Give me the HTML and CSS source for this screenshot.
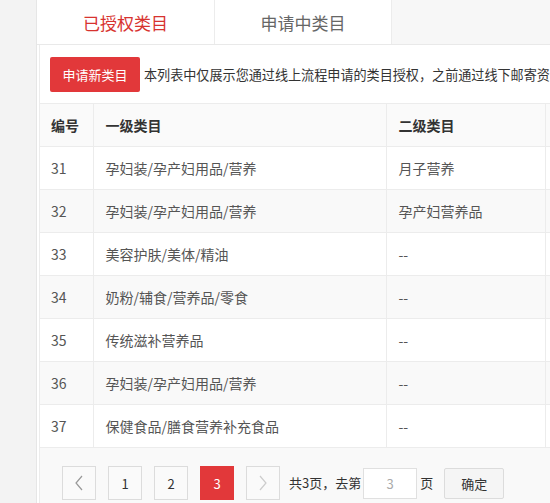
FILE: index.html
```html
<!DOCTYPE html>
<html lang="zh">
<head>
<meta charset="utf-8">
<link rel="stylesheet" href="styles.css">
</head>
<body>
<div class="page">
  <div class="side"></div>
  <div class="panel">
    <div class="tabs">
      <div class="tab active">已授权类目</div>
      <div class="tab">申请中类目</div>
      <div class="tab-rest"></div>
    </div>
    <div class="content">
      <div class="toolbar">
        <button class="btn-apply">申请新类目</button>
        <span class="note">本列表中仅展示您通过线上流程申请的类目授权，之前通过线下邮寄资质申请的类目授权请联系小二查询</span>
      </div>
      <table class="grid">
        <colgroup>
          <col class="c-id"><col class="c-l1"><col class="c-l2"><col class="c-more">
        </colgroup>
        <thead>
          <tr><th>编号</th><th>一级类目</th><th>二级类目</th><th></th></tr>
        </thead>
        <tbody>
          <tr><td>31</td><td>孕妇装/孕产妇用品/营养</td><td>月子营养</td><td></td></tr>
          <tr><td>32</td><td>孕妇装/孕产妇用品/营养</td><td>孕产妇营养品</td><td></td></tr>
          <tr><td>33</td><td>美容护肤/美体/精油</td><td>--</td><td></td></tr>
          <tr><td>34</td><td>奶粉/辅食/营养品/零食</td><td>--</td><td></td></tr>
          <tr><td>35</td><td>传统滋补营养品</td><td>--</td><td></td></tr>
          <tr><td>36</td><td>孕妇装/孕产妇用品/营养</td><td>--</td><td></td></tr>
          <tr><td>37</td><td>保健食品/膳食营养补充食品</td><td>--</td><td></td></tr>
        </tbody>
      </table>
      <div class="pager">
        <span class="pg arrow"><svg width="10" height="16" viewBox="0 0 10 16"><path d="M8 1 L2 8 L8 15" fill="none" stroke="#999" stroke-width="1.2"/></svg></span>
        <span class="pg">1</span>
        <span class="pg">2</span>
        <span class="pg current">3</span>
        <span class="pg arrow"><svg width="10" height="16" viewBox="0 0 10 16"><path d="M2 1 L8 8 L2 15" fill="none" stroke="#ccc" stroke-width="1.2"/></svg></span>
        <span class="total">共3页，去第</span>
        <span class="jump">3</span>
        <span class="unit">页</span>
        <span class="ok">确定</span>
      </div>
    </div>
  </div>
</div>
</body>
</html>
```

FILE: styles.css
```css
html, body {
  margin: 0;
  padding: 0;
  height: 100%;
  overflow: hidden;
}
body {
  background: #f3f3f3;
  font-family: "Noto Sans CJK SC", "Noto Sans", sans-serif;
  font-size: 13px;
  color: #555;
}
.page {
  display: flex;
  height: 100%;
}
.side {
  width: 36px;
  flex: none;
}
.panel {
  flex: 1;
  min-width: 0;
  background: #fff;
  border-left: 1px solid #e6e6e6;
  display: flex;
  flex-direction: column;
}
.tabs {
  display: flex;
  height: 44px;
  border-bottom: 1px solid #e9e9e9;
  flex: none;
}
.tab {
  width: 176px;
  flex: none;
  display: flex;
  align-items: center;
  justify-content: center;
  font-size: 17px;
  color: #666;
  border-right: 1px solid #ececec;
  background: #fff;
}
.tab.active {
  width: 177px;
  color: #d7332f;
}
.tab-rest {
  flex: 1;
  background: #f7f7f7;
}
.content {
  flex: 1;
  margin-left: 2px;
  border-left: 1px solid #ececec;
  display: flex;
  flex-direction: column;
  min-width: 0;
}
.toolbar {
  display: flex;
  align-items: center;
  padding: 12px 0 0 10px;
  height: 35px;
  white-space: nowrap;
  overflow: hidden;
}
.btn-apply {
  flex: none;
  width: 90px;
  height: 35px;
  border: none;
  border-radius: 2px;
  background: #e2383a;
  color: #fff;
  font-family: inherit;
  font-size: 13px;
  padding: 0;
  margin-right: 4px;
}
.note {
  color: #333;
  font-size: 13.1px;
}
.grid {
  margin-top: 11px;
  border-collapse: collapse;
  table-layout: fixed;
  width: 600px;
  border-top: 1px solid #ececec;
  font-size: 14px;
}
.c-id { width: 53px; }
.c-l1 { width: 293px; }
.c-l2 { width: 159px; }
.c-more { width: 95px; }
.grid th, .grid td {
  height: 42px;
  padding: 0 0 0 12px;
  text-align: left;
  border-bottom: 1px solid #ececec;
  border-left: 1px solid #ececec;
  white-space: nowrap;
}
.grid th:first-child, .grid td:first-child {
  border-left: none;
  padding-left: 11px;
}
.grid th {
  font-weight: bold;
  color: #333;
  background: #fafafa;
}
.grid tbody tr:nth-child(even) td {
  background: #f9f9f9;
}
.grid td {
  color: #555;
}
.pager {
  flex: 1;
  background: #f9f9f9;
  display: flex;
  align-items: flex-start;
  padding: 18px 0 0 22px;
  white-space: nowrap;
}
.pg {
  flex: none;
  width: 32px;
  height: 32px;
  border: 1px solid #dcdcdc;
  background: #fafafa;
  display: flex;
  align-items: center;
  justify-content: center;
  margin-right: 12px;
  color: #333;
  font-size: 13px;
}
.pg.current {
  background: #e2383a;
  border-color: #e2383a;
  color: #fff;
}
.total {
  margin: 0 0 0 -3px;
  line-height: 34px;
  color: #333;
}
.jump {
  flex: none;
  width: 52px;
  height: 29px;
  margin: 2px 0 0 2px;
  border: 1px solid #e0e0e0;
  background: #fff;
  display: flex;
  align-items: center;
  justify-content: center;
  color: #aaa;
}
.unit {
  margin-left: 3px;
  line-height: 34px;
  color: #333;
}
.ok {
  flex: none;
  width: 58px;
  height: 29px;
  margin: 2px 0 0 11px;
  border: 1px solid #dcdcdc;
  border-radius: 2px;
  background: #f5f5f5;
  display: flex;
  align-items: center;
  justify-content: center;
  color: #333;
}
```
